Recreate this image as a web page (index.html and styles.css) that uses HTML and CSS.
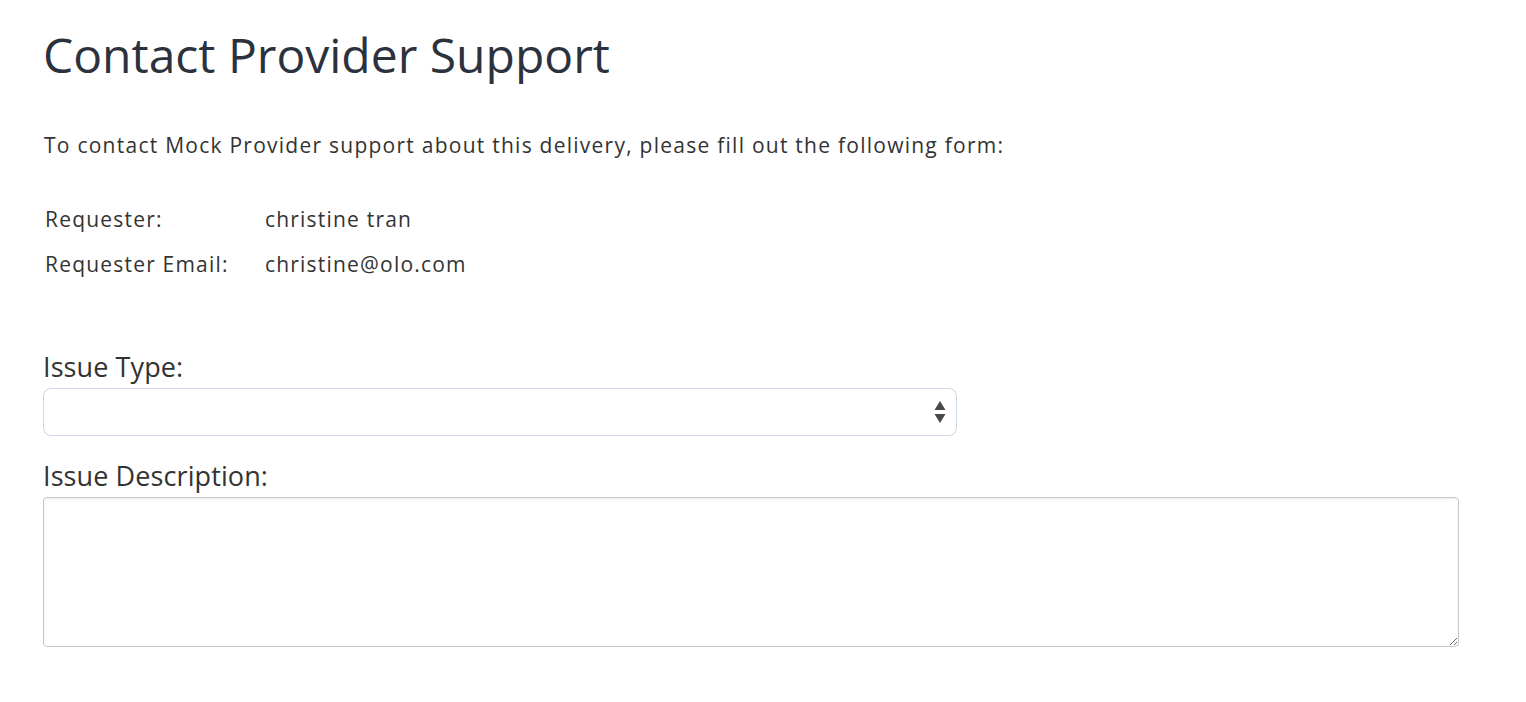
FILE: index.html
```html
<!DOCTYPE html>
<html lang="en">
<head>
<meta charset="utf-8">
<title>Contact Provider Support</title>
<link rel="stylesheet" href="styles.css">
</head>
<body>
<main class="page">
  <h1 class="title">Contact Provider Support</h1>
  <p class="intro">To contact Mock Provider support about this delivery, please fill out the following form:</p>
  <table class="info">
    <tr><td class="info-label">Requester:</td><td>christine tran</td></tr>
    <tr><td class="info-label">Requester Email:</td><td>christine@olo.com</td></tr>
  </table>
  <form class="form">
    <label class="field-label" for="issue-type">Issue Type:</label>
    <div class="select-wrap">
      <select id="issue-type" class="select"><option></option></select>
      <svg class="select-arrows" width="12" height="22" viewBox="0 0 12 22"><path d="M6 0 L11.5 9 L0.5 9 Z M0.5 13 L11.5 13 L6 22 Z" fill="#4a4a4a"/></svg>
    </div>
    <label class="field-label" for="issue-desc">Issue Description:</label>
    <textarea id="issue-desc" class="textarea"></textarea>
  </form>
</main>
</body>
</html>
```
FILE: styles.css
```css
html, body {
  margin: 0;
  padding: 0;
  background: #fff;
}
body {
  font-family: "Open Sans", "DejaVu Sans", sans-serif;
  color: #333;
}
.page {
  padding: 27px 44px 0 43px;
}
.title {
  margin: 0;
  font-size: 48px;
  font-weight: 400;
  line-height: 56px;
  color: #2b323d;
}
.intro {
  margin: 49px 0 0 1px;
  font-size: 21px;
  line-height: 26px;
  letter-spacing: 1.25px;
}
.info {
  margin: 38px 0 0 0;
  border-collapse: collapse;
  font-size: 21px;
  letter-spacing: 1.2px;
}
.info td {
  padding: 0 2px;
  height: 45px;
  vertical-align: middle;
}
.info .info-label {
  width: 216px;
}
.form {
  display: flex;
  flex-direction: column;
  margin-top: 65px;
}
.field-label {
  font-size: 27px;
  line-height: 32px;
  letter-spacing: 0.1px;
  color: #333;
  margin-bottom: 5px;
}
.select-wrap {
  position: relative;
  width: 914px;
  margin-bottom: 24px;
}
.select {
  display: block;
  width: 100%;
  height: 48px;
  appearance: none;
  -webkit-appearance: none;
  background: #fff;
  border: 1px solid #cdd8e6;
  border-radius: 8px;
  font: inherit;
}
.select-arrows {
  position: absolute;
  right: 11px;
  top: 13px;
}
.textarea {
  display: block;
  width: 1416px;
  height: 150px;
  box-sizing: border-box;
  border: 1px solid #c9c9c9;
  border-radius: 4px;
  box-shadow: inset 0 1px 2px rgba(0,0,0,0.08);
  font: inherit;
}
```
